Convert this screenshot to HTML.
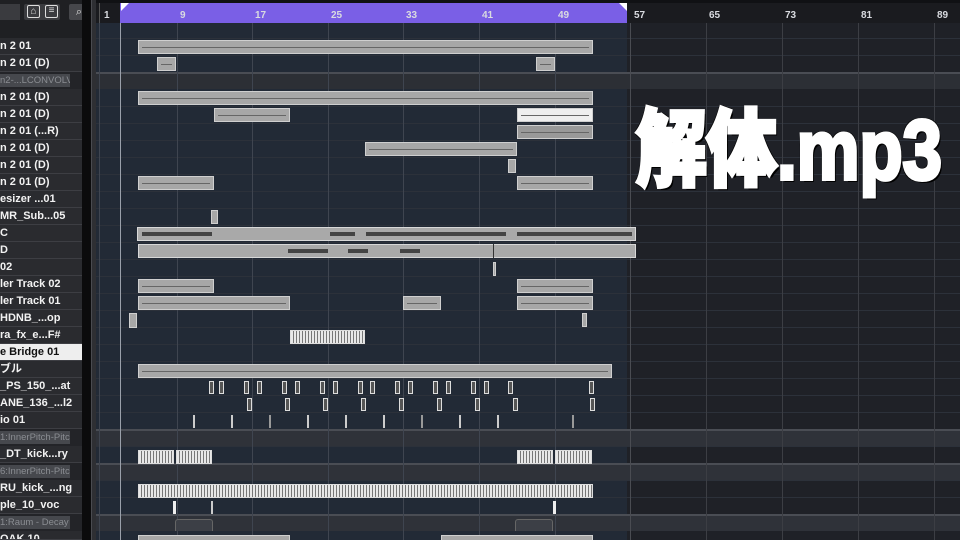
<!DOCTYPE html>
<html style="overflow:hidden"><head><meta charset="utf-8"><style>
*{margin:0;padding:0;box-sizing:border-box}
html,body{width:960px;height:540px;overflow:hidden}
body{background:#1f2126;position:relative;font-family:"Liberation Sans","Noto Sans CJK JP",sans-serif}
.a{position:absolute}
#left{left:0;top:0;width:82px;height:540px;background:#2a2b2f}
.tn{position:absolute;left:0;width:82px;height:17px;border-bottom:1px solid #3d3e43;color:#f2f2f2;font-weight:bold;font-size:11px;line-height:16px;white-space:nowrap;overflow:hidden}
.al{position:absolute;left:0;width:82px;height:17px;background:#232428}
.al span{position:absolute;left:0;top:2px;width:70px;height:13px;background:#46484d;color:#8a8d92;font-size:9.5px;line-height:13px;white-space:nowrap;overflow:hidden}
.hl{background:#eeeeee;color:#111}
.g{position:absolute;top:23px;width:1px;height:517px;background:#3f4550}
.rl{position:absolute;left:96px;width:864px;height:1px;background:#2c313a}
.lane{position:absolute;left:96px;width:864px;height:17px;background:#2f3238;border-top:2px solid #4a4d54}
.c{position:absolute;height:14px;background:#a7a7a7;border:1px solid #cfcfcf}
.c::after{content:"";position:absolute;left:3px;right:3px;top:6px;height:1px;background:#666}
.s{position:absolute;height:14px;border:1px solid #ddd;background:repeating-linear-gradient(90deg,#e8e8e8 0 2px,#777 2px 3px)}
.t{position:absolute;width:5px;height:13px;border:1px solid #ddd;background:#555}
.w{position:absolute;height:14px;background:#a9a9a9;border:1px solid #d8d8d8}
.rn{position:absolute;top:10px;color:#d9dbe0;font-weight:bold;font-size:10px}
</style></head><body>
<div class="a" style="left:96px;top:23px;width:531px;height:517px;background:#222a36"></div>
<div class="a" style="left:627px;top:23px;width:333px;height:517px;background:#1f2127"></div>
<div class="rl" style="top:38px"></div><div class="rl" style="top:55px"></div><div class="rl" style="top:106px"></div><div class="rl" style="top:123px"></div><div class="rl" style="top:140px"></div><div class="rl" style="top:157px"></div><div class="rl" style="top:174px"></div><div class="rl" style="top:191px"></div><div class="rl" style="top:208px"></div><div class="rl" style="top:225px"></div><div class="rl" style="top:242px"></div><div class="rl" style="top:259px"></div><div class="rl" style="top:276px"></div><div class="rl" style="top:293px"></div><div class="rl" style="top:310px"></div><div class="rl" style="top:327px"></div><div class="rl" style="top:344px"></div><div class="rl" style="top:361px"></div><div class="rl" style="top:378px"></div><div class="rl" style="top:395px"></div><div class="rl" style="top:412px"></div><div class="rl" style="top:446px"></div><div class="rl" style="top:480px"></div><div class="rl" style="top:497px"></div>
<div class="lane" style="top:72px;background:#2c2f35"></div>
<div class="lane" style="top:429px;background:#2f3239"></div>
<div class="lane" style="top:463px;background:#2f3239"></div>
<div class="lane" style="top:514px;background:#2f3239"></div>
<div class="g" style="left:99px"></div><div class="g" style="left:177px"></div><div class="g" style="left:252px"></div><div class="g" style="left:328px"></div><div class="g" style="left:403px"></div><div class="g" style="left:479px"></div><div class="g" style="left:555px"></div><div class="g" style="left:630px;background:#4a4c52"></div><div class="g" style="left:706px;background:#3c3e44"></div><div class="g" style="left:782px;background:#3c3e44"></div><div class="g" style="left:858px;background:#3c3e44"></div><div class="g" style="left:934px;background:#3c3e44"></div>
<div class="a" style="left:120px;top:23px;width:1px;height:517px;background:#9aa0aa"></div>
<div class="a" style="left:96px;top:0;width:864px;height:23px;background:#1a1b1f;border-top:3px solid #101114"></div>
<div class="a" style="left:120px;top:3px;width:507px;height:20px;background:#7a5fe6"></div>
<div class="a" style="left:619px;top:3px;width:0;height:0;border-left:8px solid transparent;border-top:8px solid #fff"></div>
<div class="a" style="left:121px;top:3px;width:0;height:0;border-right:8px solid transparent;border-top:8px solid #fff"></div>
<div class="a" style="left:99px;top:3px;width:1px;height:20px;background:#555"></div>
<span class="rn" style="left:104px">1</span><span class="rn" style="left:180px">9</span><span class="rn" style="left:255px">17</span><span class="rn" style="left:331px">25</span><span class="rn" style="left:406px">33</span><span class="rn" style="left:482px">41</span><span class="rn" style="left:558px">49</span><span class="rn" style="left:634px">57</span><span class="rn" style="left:709px">65</span><span class="rn" style="left:785px">73</span><span class="rn" style="left:861px">81</span><span class="rn" style="left:937px">89</span>
<div class="c" style="left:138px;top:40px;width:455px"></div>
<div class="c" style="left:157px;top:57px;width:19px"></div><div class="c" style="left:536px;top:57px;width:19px"></div>
<div class="c" style="left:138px;top:91px;width:455px"></div>
<div class="c" style="left:214px;top:108px;width:76px"></div><div class="c" style="left:517px;top:108px;width:76px;background:#eee"></div>
<div class="c" style="left:517px;top:125px;width:76px;background:#999"></div>
<div class="c" style="left:365px;top:142px;width:152px"></div>
<div class="c" style="left:508px;top:159px;width:8px"></div>
<div class="c" style="left:138px;top:176px;width:76px"></div><div class="c" style="left:517px;top:176px;width:76px"></div>
<div class="c" style="left:211px;top:210px;width:7px"></div>
<div class="w" style="left:137px;top:227px;width:499px"></div>
<div class="a" style="left:142px;top:232px;width:70px;height:4px;background:#444"></div><div class="a" style="left:330px;top:232px;width:25px;height:4px;background:#444"></div><div class="a" style="left:366px;top:232px;width:140px;height:4px;background:#444"></div><div class="a" style="left:517px;top:232px;width:115px;height:4px;background:#444"></div>
<div class="w" style="left:138px;top:244px;width:498px"></div>
<div class="a" style="left:288px;top:249px;width:40px;height:4px;background:#444"></div><div class="a" style="left:348px;top:249px;width:20px;height:4px;background:#444"></div><div class="a" style="left:400px;top:249px;width:20px;height:4px;background:#444"></div><div class="a" style="left:493px;top:244px;width:1px;height:14px;background:#333"></div>
<div class="c" style="left:493px;top:262px;width:3px"></div>
<div class="c" style="left:138px;top:279px;width:76px"></div><div class="c" style="left:517px;top:279px;width:76px"></div>
<div class="c" style="left:138px;top:296px;width:152px"></div><div class="c" style="left:403px;top:296px;width:38px"></div><div class="c" style="left:517px;top:296px;width:76px"></div>
<div class="c" style="left:129px;top:313px;width:8px;height:15px"></div><div class="c" style="left:582px;top:313px;width:5px"></div>
<div class="s" style="left:290px;top:330px;width:75px"></div>
<div class="c" style="left:138px;top:364px;width:474px"></div>
<div class="t" style="left:209px;top:381px"></div><div class="t" style="left:219px;top:381px"></div><div class="t" style="left:244px;top:381px"></div><div class="t" style="left:257px;top:381px"></div><div class="t" style="left:282px;top:381px"></div><div class="t" style="left:295px;top:381px"></div><div class="t" style="left:320px;top:381px"></div><div class="t" style="left:333px;top:381px"></div><div class="t" style="left:358px;top:381px"></div><div class="t" style="left:370px;top:381px"></div><div class="t" style="left:395px;top:381px"></div><div class="t" style="left:408px;top:381px"></div><div class="t" style="left:433px;top:381px"></div><div class="t" style="left:446px;top:381px"></div><div class="t" style="left:471px;top:381px"></div><div class="t" style="left:484px;top:381px"></div><div class="t" style="left:508px;top:381px"></div><div class="t" style="left:589px;top:381px"></div>
<div class="t" style="left:247px;top:398px"></div><div class="t" style="left:285px;top:398px"></div><div class="t" style="left:323px;top:398px"></div><div class="t" style="left:361px;top:398px"></div><div class="t" style="left:399px;top:398px"></div><div class="t" style="left:437px;top:398px"></div><div class="t" style="left:475px;top:398px"></div><div class="t" style="left:513px;top:398px"></div><div class="t" style="left:590px;top:398px"></div>
<div class="a" style="left:193px;top:415px;width:2px;height:13px;background:#ccc"></div><div class="a" style="left:231px;top:415px;width:2px;height:13px;background:#ccc"></div><div class="a" style="left:269px;top:415px;width:2px;height:13px;background:#999"></div><div class="a" style="left:307px;top:415px;width:2px;height:13px;background:#ccc"></div><div class="a" style="left:345px;top:415px;width:2px;height:13px;background:#ccc"></div><div class="a" style="left:383px;top:415px;width:2px;height:13px;background:#ccc"></div><div class="a" style="left:421px;top:415px;width:2px;height:13px;background:#999"></div><div class="a" style="left:459px;top:415px;width:2px;height:13px;background:#ccc"></div><div class="a" style="left:497px;top:415px;width:2px;height:13px;background:#ccc"></div><div class="a" style="left:572px;top:415px;width:2px;height:13px;background:#999"></div>
<div class="s" style="left:138px;top:450px;width:36px"></div><div class="s" style="left:176px;top:450px;width:36px"></div><div class="s" style="left:517px;top:450px;width:36px"></div><div class="s" style="left:555px;top:450px;width:37px"></div>
<div class="s" style="left:138px;top:484px;width:455px"></div>
<div class="a" style="left:173px;top:501px;width:3px;height:13px;background:#eee"></div><div class="a" style="left:211px;top:501px;width:2px;height:13px;background:#ccc"></div><div class="a" style="left:553px;top:501px;width:3px;height:13px;background:#eee"></div>
<div class="a" style="left:175px;top:519px;width:38px;height:12px;background:#3c3f46;border:1px solid #666;border-bottom:none;border-radius:3px 3px 0 0"></div><div class="a" style="left:515px;top:519px;width:38px;height:12px;background:#3c3f46;border:1px solid #666;border-bottom:none;border-radius:3px 3px 0 0"></div>
<div class="c" style="left:138px;top:535px;width:152px"></div><div class="c" style="left:441px;top:535px;width:152px"></div>
<div class="a" style="left:636px;top:94px;width:330px;height:100px;color:#fff;font-weight:900;font-size:84px;line-height:100px;white-space:nowrap;transform:scaleX(0.84);transform-origin:left center;-webkit-text-stroke:4px #fff;text-shadow:3px 3px 0 #000,-2px 2px 0 #000,2px -2px 0 #000,-2px -2px 0 #000"><span style="font-family:'Noto Sans CJK JP',sans-serif;font-weight:900">解体</span><span style="font-family:'Liberation Sans',sans-serif;font-weight:bold">.mp3</span></div>
<div id="left" class="a"></div>
<div class="a" style="left:0;top:0;width:82px;height:38px;background:#1f2023"></div>
<div class="a" style="left:0;top:4px;width:20px;height:16px;background:#3a3b3f"></div>
<div class="a" style="left:24px;top:4px;width:36px;height:16px;background:#3a3b3f;border-radius:2px"></div>
<div class="a" style="left:27px;top:5px;width:13px;height:13px;border:1px solid #ddd;border-radius:2px;color:#ddd;font-size:10px;line-height:11px;text-align:center">⌂</div>
<div class="a" style="left:45px;top:5px;width:13px;height:13px;border:1px solid #ddd;border-radius:2px;color:#ddd;font-size:10px;line-height:10px;text-align:center">≡</div>
<div class="a" style="left:69px;top:4px;width:20px;height:16px;background:#46474b;border-radius:2px;color:#ddd;font-size:11px;line-height:16px;text-align:center">⌕</div>
<div class="a" style="left:82px;top:0;width:9px;height:540px;background:#0b0b0c"></div>
<div class="a" style="left:91px;top:0;width:5px;height:540px;background:#2e2f33;border-left:1px solid #4a4b50"></div>
<div class="tn" style="top:38px">n 2 01</div>
<div class="tn" style="top:55px">n 2 01 (D)</div>
<div class="al" style="top:72px"><span>n2-...LCONVOLV</span></div>
<div class="tn" style="top:89px">n 2 01 (D)</div>
<div class="tn" style="top:106px">n 2 01 (D)</div>
<div class="tn" style="top:123px">n 2 01 (...R)</div>
<div class="tn" style="top:140px">n 2 01 (D)</div>
<div class="tn" style="top:157px">n 2 01 (D)</div>
<div class="tn" style="top:174px">n 2 01 (D)</div>
<div class="tn" style="top:191px">esizer ...01</div>
<div class="tn" style="top:208px">MR_Sub...05</div>
<div class="tn" style="top:225px">C</div>
<div class="tn" style="top:242px">D</div>
<div class="tn" style="top:259px">02</div>
<div class="tn" style="top:276px">ler Track 02</div>
<div class="tn" style="top:293px">ler Track 01</div>
<div class="tn" style="top:310px">HDNB_...op</div>
<div class="tn" style="top:327px">ra_fx_e...F#</div>
<div class="tn hl" style="top:344px">e Bridge 01</div>
<div class="tn" style="top:361px">ブル</div>
<div class="tn" style="top:378px">_PS_150_...at</div>
<div class="tn" style="top:395px">ANE_136_...l2</div>
<div class="tn" style="top:412px">io 01</div>
<div class="al" style="top:429px"><span>1:InnerPitch-Pitch</span></div>
<div class="tn" style="top:446px">_DT_kick...ry</div>
<div class="al" style="top:463px"><span>6:InnerPitch-Pitch</span></div>
<div class="tn" style="top:480px">RU_kick_...ng</div>
<div class="tn" style="top:497px">ple_10_voc</div>
<div class="al" style="top:514px"><span>1:Raum - Decay</span></div>
<div class="tn" style="top:531px;height:9px">OAK 10</div>
</body></html>
